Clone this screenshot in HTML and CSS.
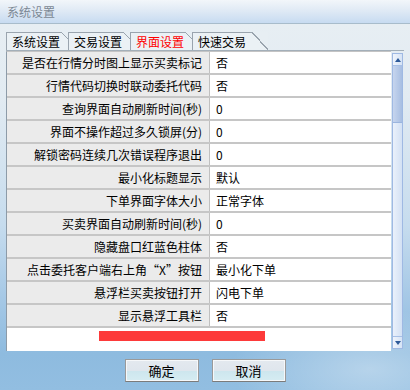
FILE: index.html
```html
<!DOCTYPE html>
<html lang="zh-CN">
<head>
  <meta charset="UTF-8">
  <meta name="viewport" content="width=device-width, initial-scale=1.0">
  <title>系统设置</title>
  <link rel="stylesheet" href="styles.css">
</head>
<body>
  <div class="dialog">
    <div class="titlebar">系统设置</div>
    <div class="body">
      <div class="tabs">
        <div class="tab">系统设置</div>
        <div class="tab">交易设置</div>
        <div class="tab active">界面设置</div>
        <div class="tab last">快速交易</div>
      </div>

      <div class="panel">
        <div class="grid">
          <div class="row"><div class="label">是否在行情分时图上显示买卖标记</div><div class="value">否</div></div>
          <div class="row"><div class="label">行情代码切换时联动委托代码</div><div class="value">否</div></div>
          <div class="row"><div class="label">查询界面自动刷新时间(秒)</div><div class="value">0</div></div>
          <div class="row"><div class="label">界面不操作超过多久锁屏(分)</div><div class="value">0</div></div>
          <div class="row"><div class="label">解锁密码连续几次错误程序退出</div><div class="value">0</div></div>
          <div class="row"><div class="label">最小化标题显示</div><div class="value">默认</div></div>
          <div class="row"><div class="label">下单界面字体大小</div><div class="value">正常字体</div></div>
          <div class="row"><div class="label">买卖界面自动刷新时间(秒)</div><div class="value">0</div></div>
          <div class="row"><div class="label">隐藏盘口红蓝色柱体</div><div class="value">否</div></div>
          <div class="row"><div class="label">点击委托客户端右上角“X”按钮</div><div class="value">最小化下单</div></div>
          <div class="row"><div class="label">悬浮栏买卖按钮打开</div><div class="value">闪电下单</div></div>
          <div class="row"><div class="label">显示悬浮工具栏</div><div class="value">否</div></div>
          <div class="row blank"><div class="mark"></div></div>
        </div>
        <div class="scrollbar">
          <div class="sb-btn"><span class="arrow up"></span></div>
          <div class="sb-thumb"></div>
          <div class="sb-track"></div>
          <div class="sb-btn"><span class="arrow down"></span></div>
        </div>
      </div>

      <div class="actions">
        <button class="btn">确定</button>
        <button class="btn">取消</button>
      </div>
    </div>
  </div>
</body>
</html>
```

FILE: styles.css
```css
body {
  margin: 0;
  font-family: "Noto Sans CJK SC", "Liberation Sans", sans-serif;
  font-size: 12px;
  color: #000;
}
.dialog {
  width: 410px;
  height: 390px;
  display: flex;
  flex-direction: column;
  overflow: hidden;
}
.titlebar {
  height: 24px;
  box-sizing: border-box;
  border-bottom: 1px solid #a8bccb;
  background: linear-gradient(#f2f6fa, #e0eaf5 45%, #c7dbf1);
  color: #7c8894;
  padding-left: 7px;
  line-height: 23px;
}
.body {
  flex: 1;
  display: flex;
  flex-direction: column;
  padding: 0 6px;
  background:
    radial-gradient(ellipse 140px 60px at 370px 345px, rgba(255, 255, 255, .35), transparent),
    linear-gradient(#e7eef3 0%, #e2ebf2 20%, #c6dcee 55%, #a5c8e6 75%, #8ebbdf 90%, #92bee1 100%);
}

/* tabs */
.tabs {
  display: flex;
  padding-top: 8px;
}
.tab {
  position: relative;
  height: 18px;
  box-sizing: border-box;
  line-height: 17px;
  padding: 0 8px 0 5px;
  border-left: 1px solid #9aa4ae;
  border-top: 1px solid #9aa4ae;
  background: #ebf1f5;
}
.tab::after {
  content: "";
  position: absolute;
  top: -1px;
  right: 0;
  width: 7px;
  height: 7px;
  background: linear-gradient(to bottom left, #e7eef3 calc(50% - .7px), #9aa4ae calc(50% - .7px) calc(50% + .7px), transparent calc(50% + .7px));
}
.tab.active {
  color: #f00;
}
.tab.last {
  margin-right: 16px;
  padding-right: 6px;
}
.tab.last::after {
  right: -16px;
  width: 16px;
  height: 18px;
  background: linear-gradient(to bottom left, #e7eef3 calc(50% - .7px), #9aa4ae calc(50% - .7px) calc(50% + .7px), #ebf1f5 calc(50% + .7px));
}

/* list */
.panel {
  display: flex;
  border-top: 1px solid #a3afb9;
}
.grid {
  flex: 1;
  border-left: 1px solid #8d9ba8;
  border-top: 1px solid #c4c4c4;
  background: #fff;
}
.row {
  display: flex;
  height: 23px;
  box-sizing: border-box;
  border-bottom: 2px solid #c6c6c6;
}
.label {
  width: 203px;
  box-sizing: border-box;
  background: #ebebeb;
  border-right: 1px solid #c0c0c0;
  text-align: right;
  padding-right: 7px;
  line-height: 21px;
  white-space: nowrap;
}
.value {
  flex: 1;
  padding-left: 6px;
  line-height: 21px;
}
.row.blank {
  border-bottom: none;
}
.mark {
  margin: 3px 0 0 92px;
  width: 166px;
  height: 10px;
  background: #fd3a3a;
}

/* scrollbar */
.scrollbar {
  width: 11px;
  height: 296px;
  margin: 2px 1px 0 1px;
  display: flex;
  flex-direction: column;
  border: 1px solid #9fb9e3;
  box-sizing: border-box;
  background: linear-gradient(to right, #eaf1fb, #d3e1f4);
}
.sb-btn {
  height: 11px;
  display: flex;
  align-items: center;
  justify-content: center;
  background: linear-gradient(to right, #f0f5fc, #d6e3f5);
  border-bottom: 1px solid #a7c0e6;
}
.sb-btn:last-child {
  border-bottom: none;
  border-top: 1px solid #a7c0e6;
}
.arrow {
  width: 0;
  height: 0;
  border-left: 3px solid transparent;
  border-right: 3px solid transparent;
}
.arrow.up {
  border-bottom: 4px solid #2d5a99;
}
.arrow.down {
  border-top: 4px solid #2d5a99;
}
.sb-thumb {
  height: 56px;
  background: linear-gradient(to right, #c6d5ee, #a7bee2);
  border-bottom: 1px solid #9bb5de;
}
.sb-track {
  flex: 1;
}

/* buttons */
.actions {
  display: flex;
  justify-content: center;
  gap: 13px;
  padding-top: 8px;
}
.btn {
  width: 74px;
  height: 23px;
  margin: 0;
  padding: 0;
  font-family: inherit;
  font-size: 13px;
  color: #000;
  border: 1px solid #9a9a9a;
  border-bottom-color: #7b7b7b;
  box-shadow: inset 0 0 0 1px #f6f8fa;
  background: linear-gradient(#e4e9ef 0%, #dfe6ed 50%, #cde6ee 52%, #d6ecf2 100%);
}
```
